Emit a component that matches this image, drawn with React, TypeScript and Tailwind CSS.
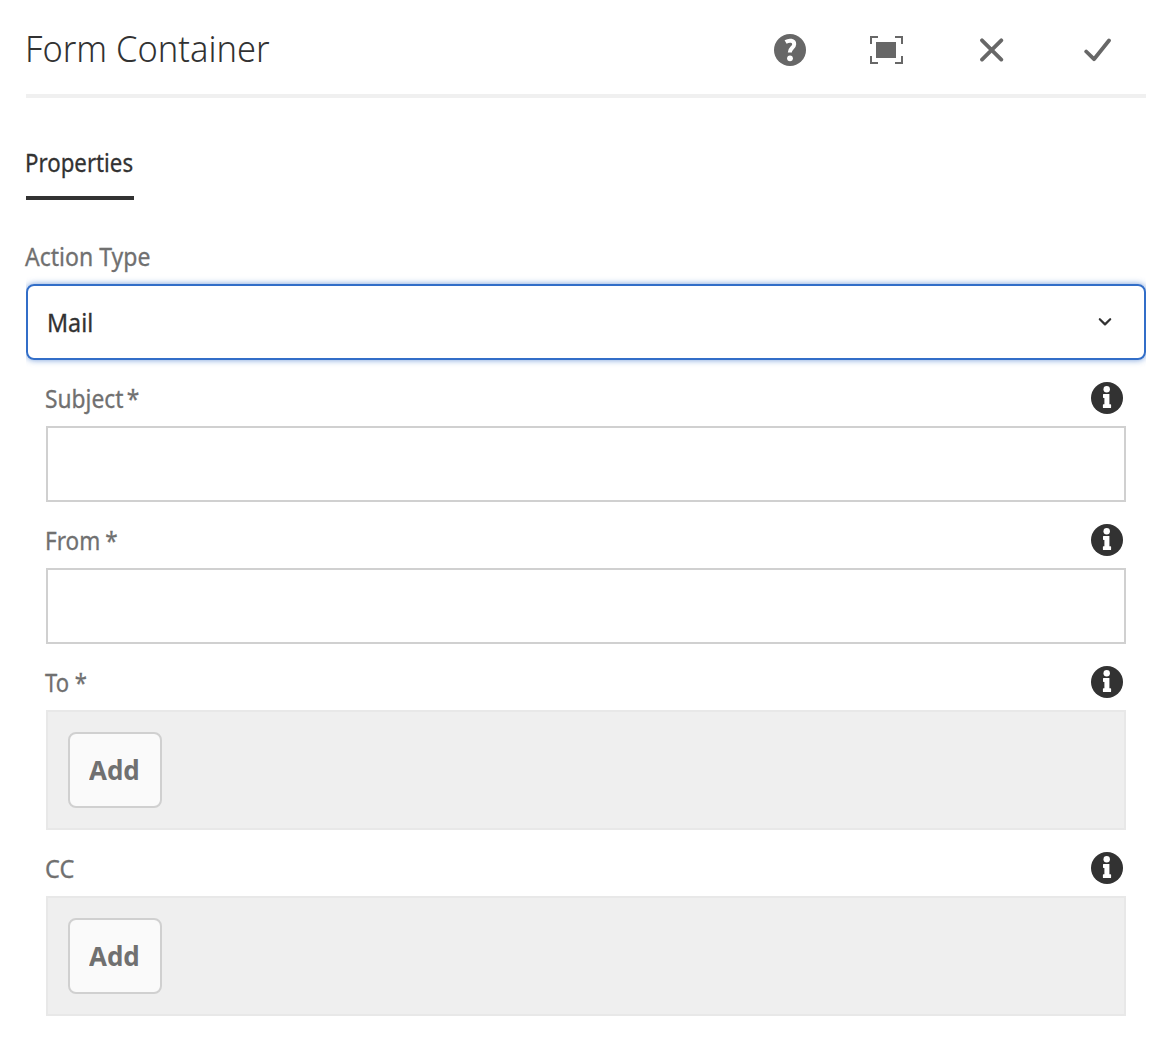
import React from "react";

function InfoIcon() {
  return (
    <svg className="block size-8 shrink-0" viewBox="0 0 32 32" fill="none">
      <circle cx="16" cy="16" r="16" fill="#323232" />
      <circle cx="15.7" cy="7.3" r="3.2" fill="#fff" />
      <path d="M12.6 12H18.4V22.2H19.4Q20.1 22.2 20.1 22.8V25.4Q20.1 26 19.4 26H12.5Q11.9 26 11.9 25.4V22.8Q11.9 22.2 12.5 22.2H13.4V15.9H12.6Q12 15.9 12 15.3V12.6Q12 12 12.6 12Z" fill="#fff" />
    </svg>
  );
}

function FieldLabel({ children }: { children: React.ReactNode }) {
  return (
    <div className="flex h-[66px] items-start justify-between pt-[22px] pr-[3px]">
      <div className="-ml-px h-8 text-[#707070]">{children}</div>
      <InfoIcon />
    </div>
  );
}

function Multifield() {
  return (
    <div className="h-[120px] border-2 border-[#e8e8e8] bg-[#efefef] p-5">
      <button className="flex h-[76px] w-[94px] items-center justify-center rounded-lg border-2 border-[#d0d0d0] bg-[#fafafa] pr-[2px] text-[#707070]">
        <span className="block origin-center scale-x-[0.96] text-[27px] leading-8 font-bold">Add</span>
      </button>
    </div>
  );
}

const labelText = "block w-max origin-left text-[24.5px] leading-[34px] [-webkit-text-stroke:0.3px]";

export default function App() {
  return (
    <main className="h-[1048px] w-[1164px] overflow-hidden bg-white pr-[18px] pl-[26px] font-['Noto_Sans',sans-serif] text-[#323232]">
      <header className="flex h-[98px] items-start justify-between border-b-4 border-[#f0f0f0]">
        <h1 className="mt-[23px] -ml-px w-max origin-left scale-x-[0.918] text-[37.5px] leading-[50px] font-light">Form Container</h1>
        <div className="mt-[34px] mr-[34px] flex h-8 shrink-0 items-center">
          <svg className="mr-16 block h-8 w-8" viewBox="0 0 32 32" fill="none">
            <circle cx="16" cy="16" r="16" fill="#676767" />
            <path d="M11.6 8C15.3 5.8 20.2 6.2 20.2 10.2C20.2 13.6 15.8 14 15.8 18.4" stroke="#fff" strokeWidth="4" />
            <circle cx="16" cy="24.3" r="2.9" fill="#fff" />
          </svg>
          <svg className="mr-[77px] block h-7 w-[33px]" viewBox="0 0 33 28" fill="none">
            <path d="M1 8V1H8M25 1H32V8M32 20V27H25M8 27H1V20" stroke="#676767" strokeWidth="2" />
            <path d="M6 6H26V22H6Z" fill="#676767" />
          </svg>
          <svg className="mr-[80px] block h-6 w-6" viewBox="0 0 24 24" fill="none">
            <path d="M2 2.3L21.3 21.6M21.3 2.3L2 21.6" stroke="#676767" strokeWidth="3.8" strokeLinecap="round" />
          </svg>
          <svg className="block h-6 w-7" viewBox="0 0 28 24" fill="none">
            <path d="M2.2 13.5L10 21.2L25 2.5" stroke="#676767" strokeWidth="3.8" strokeLinecap="round" strokeLinejoin="round" />
          </svg>
        </div>
      </header>

      <nav className="mt-12 flex">
        <div className="h-[54px] w-[108px] border-b-4 border-[#323232]">
          <span className={`${labelText} -ml-px scale-x-[0.908]`}>Properties</span>
        </div>
      </nav>

      <section className="pt-[40px]">
        <div className="-ml-px h-11 text-[#707070]">
          <span className={`${labelText} scale-x-[0.94]`}>Action Type</span>
        </div>
        <div className="flex h-[76px] items-center justify-between rounded-lg border-2 border-[#326ec8] pr-[32px] pl-[19px] shadow-[0_0_6px_#326ec8b0] [clip-path:inset(-10px_0)]">
          <span className={`${labelText} mt-[2px] scale-x-[0.95]`}>Mail</span>
          <svg className="mb-[1px] block h-[10px] w-[14px]" viewBox="0 0 14 10" fill="none">
            <path d="M1.8 2.2L7 7.4L12.2 2.2" stroke="#323232" strokeWidth="2.2" strokeLinecap="round" strokeLinejoin="round" />
          </svg>
        </div>
        <div className="px-5">
          <FieldLabel><span className={`${labelText} scale-x-[0.93] [word-spacing:-3px]`}>Subject *</span></FieldLabel>
          <input aria-label="Subject" className="block h-[76px] w-full border-2 border-[#d0d0d0] px-5 text-2xl outline-none" />
          <FieldLabel><span className={`${labelText} scale-x-[0.92] [word-spacing:-1px]`}>From *</span></FieldLabel>
          <input aria-label="From" className="block h-[76px] w-full border-2 border-[#d0d0d0] px-5 text-2xl outline-none" />
          <FieldLabel><span className={`${labelText} scale-x-[0.9]`}>To *</span></FieldLabel>
          <Multifield />
          <FieldLabel><span className={`${labelText} scale-x-[0.96]`}>CC</span></FieldLabel>
          <Multifield />
        </div>
      </section>
    </main>
  );
}
